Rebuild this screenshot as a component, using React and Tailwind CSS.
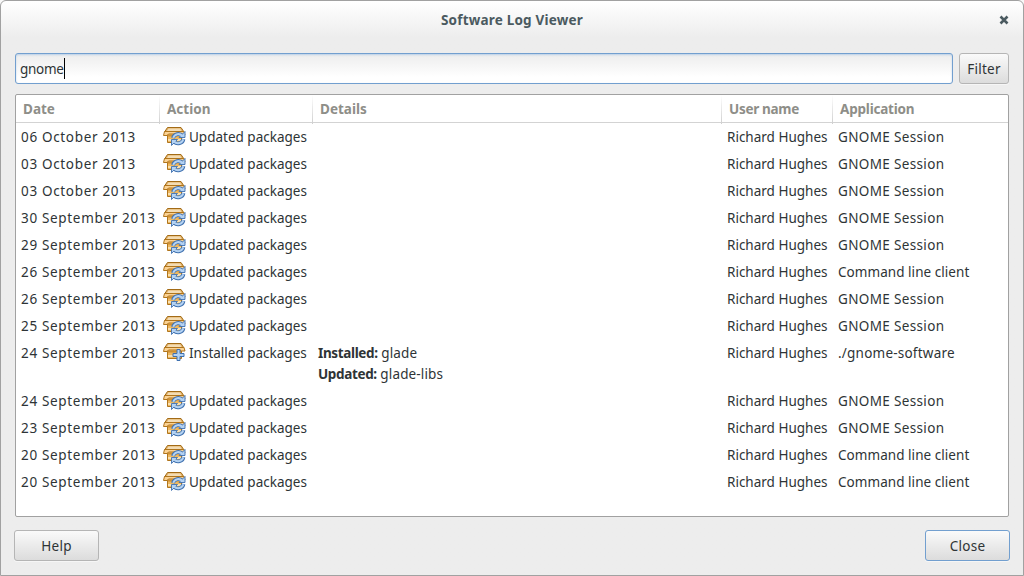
const rows = [
  ['06 October 2013', 'Updated packages', 'GNOME Session'],
  ['03 October 2013', 'Updated packages', 'GNOME Session'],
  ['03 October 2013', 'Updated packages', 'GNOME Session'],
  ['30 September 2013', 'Updated packages', 'GNOME Session'],
  ['29 September 2013', 'Updated packages', 'GNOME Session'],
  ['26 September 2013', 'Updated packages', 'Command line client'],
  ['26 September 2013', 'Updated packages', 'GNOME Session'],
  ['25 September 2013', 'Updated packages', 'GNOME Session'],
  [
    '24 September 2013',
    'Installed packages',
    './gnome-software',
    [
      ['Installed:', 'glade'],
      ['Updated:', 'glade-libs'],
    ],
  ],
  ['24 September 2013', 'Updated packages', 'GNOME Session'],
  ['23 September 2013', 'Updated packages', 'GNOME Session'],
  ['20 September 2013', 'Updated packages', 'Command line client'],
  ['20 September 2013', 'Updated packages', 'Command line client'],
];

const columns = 'grid grid-cols-[144px_153px_409px_111px_1fr]';

function PackageIcon({ installed }) {
  return (
    <svg viewBox="0 0 24 24" className="h-6 w-6 shrink-0">
      <path d="M4.500 8h14v9.500h-14z" fill="#eeb860" stroke="#b0751c" />
      <path d="M5 10h13v1.500H5z" fill="#cf8f32" />
      <path d="M5 14h13v2H5z" fill="#fae0ae" />
      <path d="M4.500 2.500h13.500l3 4.500h-19.500z" fill="#e3b267" stroke="#a36b16" strokeLinejoin="round" />
      <path d="M5.500 3.500h11.500l1.500 2.500H4z" fill="#f3dcb4" />
      <path d="M1.500 6.500h19.500l1 3.500h-3.500l-1.500-1H5.500L4 10.500H.5z" fill="#fbd293" stroke="#b0751c" strokeLinejoin="round" />
      {installed ? (
        <path
          d="M14 8.500h3v4h4v3h-4v4h-3v-4h-4v-3h4z"
          fill="#b4d2f2"
          stroke="#3f71b0"
          strokeLinejoin="round"
        />
      ) : (
        <g strokeLinejoin="round">
          <path d="M10 13a5.500 5.500 0 0 1 9.500-2M20.500 14a5.500 5.500 0 0 1-9.500 2.500" fill="none" stroke="#3f71b0" strokeWidth="3.800" />
          <path d="M22 6.500v6h-6zM8.500 20.500v-6h6z" fill="#b4d2f2" stroke="#3f71b0" strokeWidth="0.9" />
          <path d="M10.200 12.800a5.500 5.500 0 0 1 9.300-1.800M20.300 14.200a5.500 5.500 0 0 1-9.300 2.300" fill="none" stroke="#b4d2f2" strokeWidth="2" />
        </g>
      )}
    </svg>
  );
}

function Button({ children, className }) {
  return (
    <button
      className={`h-[31px] rounded-[3px] border bg-linear-to-b from-[#fafafa] to-[#dcdcdc] pt-px text-center tracking-[0.25px] shadow-[0_1px_0_#f6f6f6] ${className}`}
    >
      {children}
    </button>
  );
}

function HeaderCell({ children, className = '', last = false }) {
  return (
    <div className="flex justify-between pl-[7px]">
      <span className={className}>{children}</span>
      {!last && <span className="w-px bg-linear-to-b from-white to-[#cfcfcf]" />}
    </div>
  );
}

export default function App() {
  return (
    <div className="h-[576px] w-[1024px] bg-[#f8f8f8] font-['Noto_Sans',sans-serif] text-[13.500px] leading-[20px] whitespace-nowrap text-[#2e3436]">
      <div className="flex h-full flex-col rounded-t-[6px] border border-[#a1a1a1] bg-[#ededed] bg-linear-to-b from-white from-0% to-[#ededed] to-[36px] px-[13px]">
        <header className="grid h-[52px] shrink-0 grid-cols-[1fr_auto_1fr] items-start pt-[9px]">
          <h1 className="col-start-2 font-bold tracking-[0.2px] text-[#4b5a60]">Software Log Viewer</h1>
          <button aria-label="Close window" className="mt-[5px] mr-[1px] justify-self-end">
            <svg viewBox="0 0 10 10" className="h-[10px] w-[10px]">
              <path d="M1.500 1.500l7 7M8.500 1.500l-7 7" stroke="#4b5a60" strokeWidth="2.600" />
            </svg>
          </button>
        </header>

        <div className="flex h-[31px] shrink-0 gap-[6px] pl-px">
          <div className="flex w-[938px] items-center rounded-[3px] border border-[#729fcf] bg-linear-to-b from-[#ededed] to-white to-80% pl-[4px] shadow-[inset_0_1px_2px_#bad0e8]">
            <span className="tracking-[-0.3px]">gnome</span>
            <span className="h-[21px] w-px bg-black" />
          </div>
          <Button className="w-[50px] border-[#b5b5b5]">Filter</Button>
        </div>

        <section className="mt-[10px] ml-px h-[423px] w-[994px] shrink-0 rounded-[2px] border border-[#a1a1a1] bg-white">
          <div className={`${columns} h-[28px] border-b border-[#d3d3d3] leading-[29px] font-bold text-[#8e8e88]`}>
            <HeaderCell>Date</HeaderCell>
            <HeaderCell>Action</HeaderCell>
            <HeaderCell>Details</HeaderCell>
            <HeaderCell className="tracking-[-0.300px]">User name</HeaderCell>
            <HeaderCell className="tracking-[-0.200px]" last>Application</HeaderCell>
          </div>
          <div>
            {rows.map(([date, action, app, details], i) => (
              <div key={i} className={`${columns} ${details ? 'h-[48px]' : 'h-[27px]'} leading-[28px]`}>
                <span className="pl-[5px] tracking-[0.670px]">{date}</span>
                <span className="flex gap-[2px] pl-[3px]">
                  <span className="pt-[2px]">
                    <PackageIcon installed={Boolean(details)} />
                  </span>
                  <span>{action}</span>
                </span>
                <span className="pt-[4px] pl-[5px] leading-[21px]">
                  {details?.map(([label, name]) => (
                    <span key={label} className="block">
                      <b className="tracking-[-0.350px]">{label}</b> <span className="tracking-[0.150px]">{name}</span>
                    </span>
                  ))}
                </span>
                <span className="pl-[5px]">Richard Hughes</span>
                <span className={`pl-[5px] ${app === 'GNOME Session' ? 'tracking-[0.350px]' : app.startsWith('.') ? 'tracking-[0.220px]' : 'tracking-[0.050px]'}`}>
                  {app}
                </span>
              </div>
            ))}
          </div>
        </section>

        <footer className="mt-[13px] flex justify-between">
          <Button className="w-[85px] border-[#b5b5b5]">Help</Button>
          <Button className="w-[85px] border-[#729fcf]">Close</Button>
        </footer>
      </div>
    </div>
  );
}
